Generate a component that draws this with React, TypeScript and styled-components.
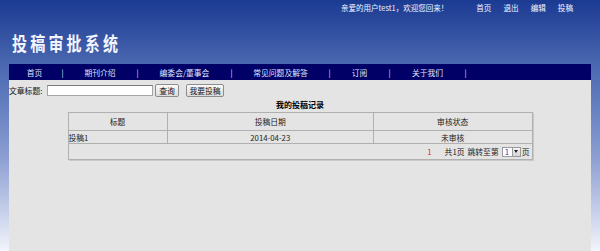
import React from 'react';
import styled, { createGlobalStyle } from 'styled-components';

const GlobalStyle = createGlobalStyle`
  html, body {
    margin: 0;
    padding: 0;
    height: 100%;
  }

  body {
    background: linear-gradient(
      to bottom,
      #1b3a92 0px,
      #4a67b0 64px,
      #6781c1 110px,
      #8fa1d3 160px,
      #c4cee9 210px,
      #f3f5fb 251px
    );
    font-family: "Noto Sans CJK SC", "DejaVu Sans", sans-serif;
    font-size: 7.8px;
  }

  #root {
    height: 100%;
  }
`;

const Page = styled.div`
  width: 582px;
  height: 100%;
  margin: 0 auto;

  display: flex;
  flex-direction: column;
`;

const Header = styled.div`
  height: 64px;
  display: flex;
  flex-direction: column;
`;

const TopBar = styled.div`
  display: flex;
  justify-content: flex-end;
  align-items: center;

  height: 15px;
  padding-right: 18px;

  color: #f4f6ff;
  font-size: 7.5px;
`;

const Greeting = styled.span`
  margin-right: 28px;
`;

const TopLink = styled.a`
  color: #f4f6ff;
  text-decoration: none;
  font-size: 7.6px;

  & + & {
    margin-left: 12px;
  }
`;

const SiteTitle = styled.h1`
  margin: 18px 0 0 3px;
  padding: 0;

  display: inline-block;
  transform: scaleY(1.25);
  transform-origin: top left;

  color: #f2f4ff;
  font-size: 15px;
  font-weight: bold;
  letter-spacing: 3.2px;
  line-height: 15px;
`;

const NavBar = styled.div`
  height: 16px;
  display: flex;
  align-items: center;

  background: #000066;
  color: #dfe6ff;
`;

const NavItem = styled.a<{ $width: number }>`
  width: ${(p) => p.$width}px;
  text-align: center;
  color: #dfe6ff;
  text-decoration: none;
`;

const NavSep = styled.span`
  width: 5px;
  text-align: center;
`;

const Content = styled.div`
  flex: 1;
  background: #e4e4e4;
`;

const SearchRow = styled.div`
  display: flex;
  align-items: center;

  height: 13px;
  padding-top: 4px;
  color: #111;
`;

const SearchLabel = styled.span`
  width: 38px;
`;

const SearchInput = styled.input`
  box-sizing: border-box;
  width: 106px;
  height: 11px;
  margin: 0 2px 0 0;
  padding: 0;

  background: #fff;
  border: 1px solid #a4a4a4;
  border-top-color: #7a7a7a;
`;

const Button = styled.button<{ $width: number }>`
  box-sizing: border-box;
  width: ${(p) => p.$width}px;
  height: 13px;
  margin-right: 7px;
  padding: 0;

  background: linear-gradient(#fafafa, #dcdcdc);
  border: 1px solid #8c8c8c;
  border-radius: 2px;

  color: #111;
  font-family: inherit;
  font-size: 7.8px;
  line-height: 11px;
`;

const RecordsTitle = styled.div`
  height: 15px;
  line-height: 15px;
  text-align: center;

  color: #000;
  font-weight: bold;
  font-size: 8px;
`;

const RecordsTable = styled.table`
  width: 465px;
  margin: 0 auto;
  border-collapse: collapse;
  border: 1px solid #9a9a9a;
  box-shadow: 1px 1px 0 #c8c8c8;
`;

const HeadCell = styled.td<{ $width: number }>`
  width: ${(p) => p.$width}px;
  height: 17px;
  padding: 0;
  border: 1px solid #b0b0b0;

  text-align: center;
  color: #222;
`;

const Cell = styled.td<{ $align?: string }>`
  height: 12px;
  padding: 0;
  border: 1px solid #b0b0b0;

  text-align: ${(p) => p.$align || 'center'};
  color: #222;
`;

const PagerCell = styled.td`
  height: 15px;
  padding: 0 2px 0 0;
  border: 1px solid #b0b0b0;
`;

const Pager = styled.div`
  display: flex;
  justify-content: flex-end;
  align-items: center;
  color: #222;
`;

const CurrentPage = styled.span`
  margin-right: 13px;
  color: #e0303a;
`;

const PagerText = styled.span`
  margin-right: 3px;
`;

const FakeSelect = styled.span`
  display: flex;
  align-items: stretch;

  box-sizing: border-box;
  width: 19px;
  height: 10px;
  margin-right: 1px;

  background: #fff;
  border: 1px solid #9a9a9a;
`;

const SelectValue = styled.span`
  flex: 1;
  padding-left: 2px;
  color: #3a35c8;
  line-height: 8px;
`;

const SelectArrow = styled.span`
  width: 7px;
  display: flex;
  align-items: center;
  justify-content: center;

  background: linear-gradient(#f4f4f4, #d4d4d4);
  border-left: 1px solid #9a9a9a;

  &::after {
    content: '';
    border-left: 2px solid transparent;
    border-right: 2px solid transparent;
    border-top: 3px solid #222;
  }
`;

const navItems = [
  { label: '首页', width: 51 },
  { label: '期刊介绍', width: 70 },
  { label: '编委会/董事会', width: 89 },
  { label: '常见问题及解答', width: 93 },
  { label: '订阅', width: 55 },
  { label: '关于我们', width: 71 },
];

const App: React.FC = () => {
  return (
    <>
      <GlobalStyle />
      <Page>
        <Header>
          <TopBar>
            <Greeting>亲爱的用户test1，欢迎您回来！</Greeting>
            <TopLink>首页</TopLink>
            <TopLink>退出</TopLink>
            <TopLink>编辑</TopLink>
            <TopLink>投稿</TopLink>
          </TopBar>
          <div>
            <SiteTitle>投稿审批系统</SiteTitle>
          </div>
        </Header>

        <NavBar>
          {navItems.map((item) => (
            <React.Fragment key={item.label}>
              <NavItem $width={item.width}>{item.label}</NavItem>
              <NavSep>|</NavSep>
            </React.Fragment>
          ))}
        </NavBar>

        <Content>
          <SearchRow>
            <SearchLabel>文章标题:</SearchLabel>
            <SearchInput type="text" />
            <Button $width={24}>查询</Button>
            <Button $width={38}>我要投稿</Button>
          </SearchRow>

          <RecordsTitle>我的投稿记录</RecordsTitle>

          <RecordsTable>
            <tbody>
              <tr>
                <HeadCell $width={99}>标题</HeadCell>
                <HeadCell $width={207}>投稿日期</HeadCell>
                <HeadCell $width={159}>审核状态</HeadCell>
              </tr>
              <tr>
                <Cell $align="left">投稿1</Cell>
                <Cell>2014-04-23</Cell>
                <Cell>未审核</Cell>
              </tr>
              <tr>
                <PagerCell colSpan={3}>
                  <Pager>
                    <CurrentPage>1</CurrentPage>
                    <PagerText>共1页</PagerText>
                    <PagerText>跳转至第</PagerText>
                    <FakeSelect>
                      <SelectValue>1</SelectValue>
                      <SelectArrow />
                    </FakeSelect>
                    <span>页</span>
                  </Pager>
                </PagerCell>
              </tr>
            </tbody>
          </RecordsTable>
        </Content>
      </Page>
    </>
  );
};

export default App;
